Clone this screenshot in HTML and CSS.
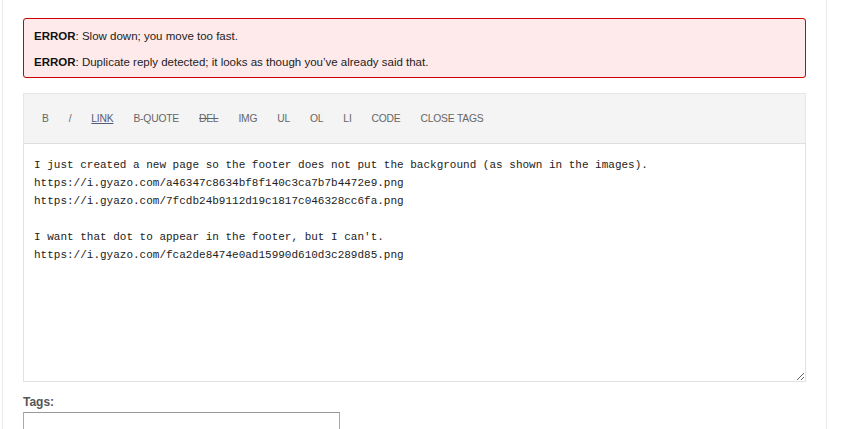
FILE: index.html
```html
<!DOCTYPE html>
<html>
<head>
<meta charset="utf-8">
<link rel="stylesheet" href="styles.css">
</head>
<body>
<div class="page">
  <div class="errors">
    <p><b>ERROR</b>: Slow down; you move too fast.</p>
    <p><b>ERROR</b>: Duplicate reply detected; it looks as though you’ve already said that.</p>
  </div>
  <div class="editor">
    <div class="toolbar">
      <span class="btn">B</span>
      <span class="btn">/</span>
      <span class="btn link">LINK</span>
      <span class="btn">B-QUOTE</span>
      <span class="btn del">DEL</span>
      <span class="btn">IMG</span>
      <span class="btn">UL</span>
      <span class="btn">OL</span>
      <span class="btn">LI</span>
      <span class="btn">CODE</span>
      <span class="btn">CLOSE TAGS</span>
    </div>
    <textarea class="content" spellcheck="false">I just created a new page so the footer does not put the background (as shown in the images).
https://i.gyazo.com/a46347c8634bf8f140c3ca7b7b4472e9.png
https://i.gyazo.com/7fcdb24b9112d19c1817c046328cc6fa.png

I want that dot to appear in the footer, but I can't.
https://i.gyazo.com/fca2de8474e0ad15990d610d3c289d85.png</textarea>
  </div>
  <label class="tags-label">Tags:</label>
  <div class="tags-input"></div>
</div>
</body>
</html>
```

FILE: styles.css
```css
html, body {
  margin: 0;
  padding: 0;
  background: #ffffff;
  height: 100%;
  overflow: hidden;
}
body {
  font-family: "Liberation Sans", Arial, sans-serif;
  color: #333;
}
.page {
  margin-left: 2px;
  width: 825px;
  min-height: 100%;
  border-left: 1px solid #ececec;
  border-right: 1px solid #ececec;
  background: #fff;
  padding: 18px 20px 0 20px;
  box-sizing: border-box;
}
.errors {
  background: #feeaea;
  border: 1px solid #cc0000;
  border-radius: 3px;
  padding: 9px 10px 7px 10px;
  font-size: 11.5px;
  color: #222;
}
.errors p {
  margin: 0;
  line-height: 16px;
}
.errors p + p {
  margin-top: 10px;
}
.errors b {
  font-weight: bold;
  color: #111;
}
.editor {
  margin-top: 15px;
}
.toolbar {
  display: flex;
  align-items: center;
  gap: 20px;
  height: 51px;
  padding: 0 0 0 18px;
  background: #f4f4f4;
  border: 1px solid #e6e6e6;
  border-bottom: 1px solid #dedede;
  box-sizing: border-box;
  font-size: 10.3px;
  letter-spacing: -0.2px;
  color: #666;
}
.btn.link {
  color: #555a78;
  text-decoration: underline;
}
.btn.del {
  text-decoration: line-through;
}
.content {
  display: block;
  width: 100%;
  height: 238px;
  margin: 0;
  box-sizing: border-box;
  border: 1px solid #e2e2e2;
  border-top: none;
  padding: 12px 10px 9px 10px;
  font-family: "Liberation Mono", "DejaVu Sans Mono", monospace;
  font-size: 11px;
  line-height: 18px;
  color: #222;
  background: #fff;
  resize: vertical;
  outline: none;
}
.tags-label {
  display: block;
  margin-top: 13px;
  font-size: 12px;
  font-weight: bold;
  color: #555;
  line-height: 15px;
}
.tags-input {
  margin-top: 2px;
  width: 317px;
  height: 30px;
  border: 1px solid #aaa;
  border-top-color: #999;
  box-sizing: border-box;
}
```
